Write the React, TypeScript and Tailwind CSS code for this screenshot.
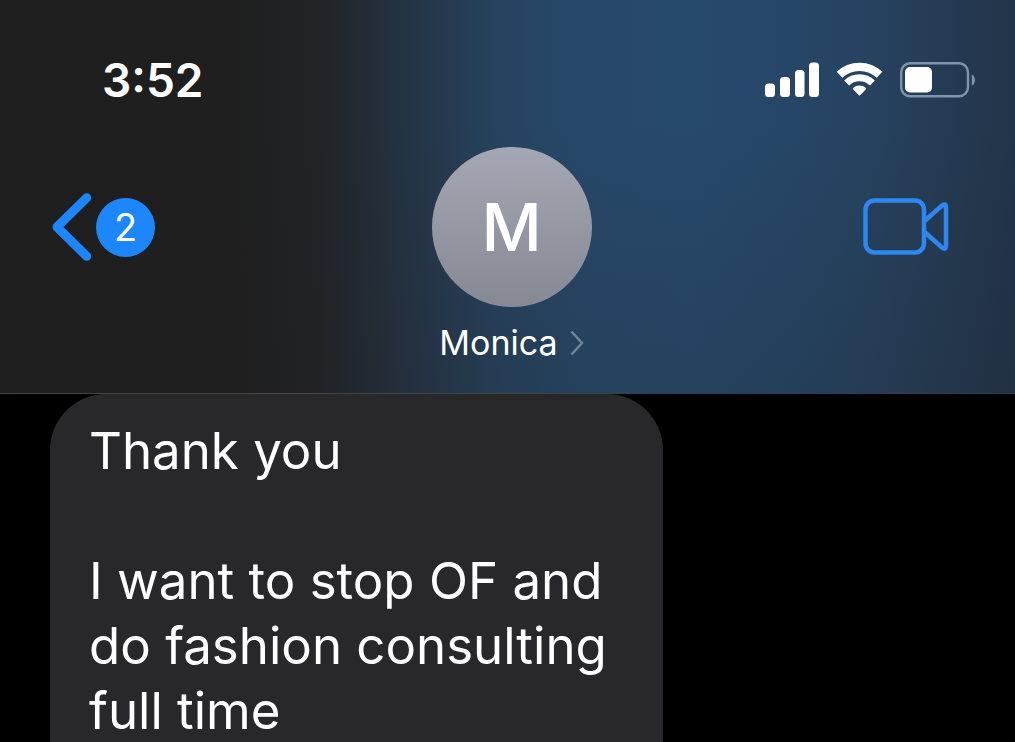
import { ReactNode } from "react";

interface Message {
  id: number;
  paragraphs: string[];
}

const contact = { name: "Monica", initial: "M", unread: 2 };

const messages: Message[] = [
  {
    id: 1,
    paragraphs: ["Thank you", "I want to stop OF and do fashion consulting full time"],
  },
];

function SignalIcon() {
  return (
    <svg width="54" height="36" viewBox="0 0 54 36" fill="white" aria-hidden="true">
      <rect x="0" y="21.5" width="10" height="13.5" rx="3.5" />
      <rect x="15" y="15" width="10" height="20" rx="3.5" />
      <rect x="30" y="8" width="9.5" height="27" rx="3.5" />
      <rect x="44" y="0.5" width="10" height="34.5" rx="3.5" />
    </svg>
  );
}

function WifiIcon() {
  return (
    <svg width="47" height="36" viewBox="0 0 47 36" fill="none" stroke="white" aria-hidden="true">
      <path d="M3.5 12.8a29 29 0 0 1 40 0" strokeWidth="8.2" />
      <path d="M10.6 21a18.5 18.5 0 0 1 25.8 0" strokeWidth="7" />
      <path
        d="M17.6 26.6a9 9 0 0 1 11.8 0l-5.9 6z"
        fill="white"
        strokeWidth="1.6"
        strokeLinejoin="round"
      />
    </svg>
  );
}

function BatteryIcon() {
  return (
    <svg width="75" height="36" viewBox="0 0 75 36" fill="none" aria-hidden="true">
      <rect x="1.2" y="1.2" width="66.8" height="33" rx="9" stroke="#8095ab" strokeWidth="2.4" />
      <rect x="5" y="5" width="27" height="25.5" rx="5" fill="white" />
      <path d="M71.8 12.5c4.2 1.8 4.2 9.4 0 11.2z" fill="#8095ab" />
    </svg>
  );
}

function BackIcon() {
  return (
    <svg width="40" height="68" viewBox="0 0 40 68" fill="none" aria-hidden="true">
      <path
        d="M34.7 4.7L5 34l29.7 29.3"
        stroke="#1c86fc"
        strokeWidth="9"
        strokeLinecap="round"
        strokeLinejoin="round"
      />
    </svg>
  );
}

function VideoIcon() {
  return (
    <svg
      width="86"
      height="58"
      viewBox="0 0 86 58"
      fill="none"
      stroke="#2d87f0"
      strokeWidth="4.5"
      strokeLinejoin="round"
      aria-hidden="true"
    >
      <rect x="2.5" y="2.5" width="58.5" height="52" rx="9" />
      <path d="M61 23.5L79 7.5Q83 4.5 83 9.5V47.5Q83 52.5 79 49.5L61 33.5" />
    </svg>
  );
}

function ChevronIcon() {
  return (
    <svg width="14" height="26" viewBox="0 0 14 26" fill="none" aria-hidden="true">
      <path d="M1.5 1.5L12 13L1.5 24.5" stroke="#6f849b" strokeWidth="2.5" />
    </svg>
  );
}

function StatusBar() {
  return (
    <div className="flex h-9 items-center justify-between pl-[102px] pr-10">
      <time className="text-[46px] leading-9 font-semibold">3:52</time>
      <div className="flex items-center gap-[17px]">
        <SignalIcon />
        <WifiIcon />
        <BatteryIcon />
      </div>
    </div>
  );
}

function Bubble({ children }: { children: ReactNode }) {
  return (
    <div className="w-fit max-w-[613px] rounded-[56px] bg-[#28282a] px-[39px] py-6 text-[51px] leading-[65px]">
      {children}
    </div>
  );
}

export default function App() {
  return (
    <div className="flex h-screen flex-col overflow-hidden bg-black font-['Inter','Liberation_Sans',sans-serif] text-white">
      <header className="shrink-0 bg-[linear-gradient(to_bottom,transparent_30%,rgba(30,30,30,0.18)),linear-gradient(to_right,#1e1e1e_0%,#1f1f1f_23%,#212326_31%,#24303c_38%,#263a50_44%,#26435f_49%,#27486a_57%,#27496c_68%,#264667_78%,#26425f_86%,#24384f_96%,#22344a_100%)] pt-[62px]">
        <StatusBar />
        <div className="mt-[49px] grid grid-cols-[1fr_auto_1fr] pr-11 pl-[52px]">
          <button
            type="button"
            aria-label="Back, 2 unread"
            className="flex h-40 items-center gap-1 justify-self-start"
          >
            <BackIcon />
            <span className="flex size-[59px] items-center justify-center rounded-full bg-[#1c86fc] text-[38px]">
              {contact.unread}
            </span>
          </button>

          <button type="button" className="flex flex-col items-center">
            <span className="flex size-40 items-center justify-center rounded-full bg-linear-to-b from-[#a5a8b4] to-[#868993] text-[66px] font-medium">
              {contact.initial}
            </span>
            <span className="mt-4 flex items-center gap-3 text-[34px] leading-10">
              {contact.name}
              <ChevronIcon />
            </span>
          </button>

          <button
            type="button"
            aria-label="Video call"
            className="flex h-40 items-center justify-self-end px-[22px]"
          >
            <VideoIcon />
          </button>
        </div>
        <div className="mt-[30px] h-px bg-linear-to-r from-[#444547] from-50% to-[#2a3f58] to-65%" />
      </header>

      <main className="min-h-0 flex-1 overflow-hidden pr-10 pl-[50px]">
        {messages.map((message) => (
          <Bubble key={message.id}>
            {message.paragraphs.map((text) => (
              <p key={text} className="mb-[65px]">
                {text}
              </p>
            ))}
          </Bubble>
        ))}
      </main>
    </div>
  );
}
